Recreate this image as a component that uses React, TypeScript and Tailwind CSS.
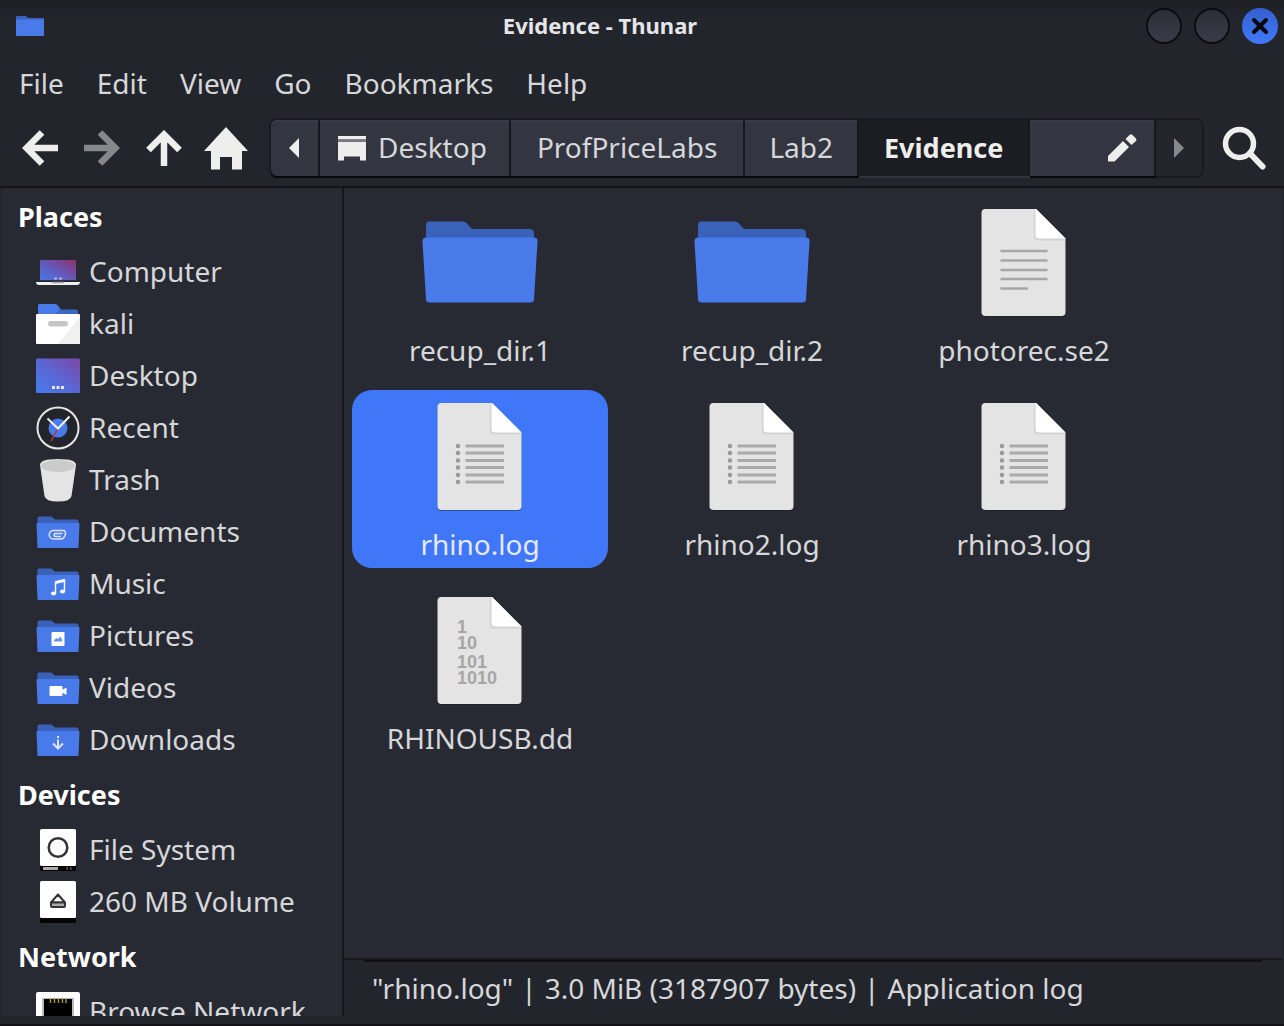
import type { ReactNode } from "react";

function Folder({ children, className }: { children?: ReactNode; className?: string }) {
  return (
    <svg viewBox="0 0 44 44" className={className ?? "size-11"} aria-hidden="true">
      <path d="M1.5 14V8Q1.5 6.5 3 6.5H15.5L19 9.5H41Q42.5 9.5 42.5 11V14Z" fill="#3a62bb" />
      <path d="M.5 14Q.5 13 1.5 13H42.5Q43.5 13 43.5 14L42.5 37Q42.5 38 41.5 38H2.5Q1.5 38 1.5 37Z" fill="#487ae9" />
      {children}
    </svg>
  );
}

function LargeFolder() {
  return (
    <svg viewBox="0 0 128 128" className="size-32" aria-hidden="true">
      <path d="M10 40V25Q10 21.500 13 21.500H47Q49 21.500 50.500 23L56 29H113Q118 29 118 34V40Z" fill="#3a62bb" />
      <path d="M6.500 42Q6.300 37.500 10 37.500H118Q122 37.500 121.500 42L118 99Q118 102.500 114.500 102.500H13.500Q10 102.500 10 99Z" fill="#487ae9" />
    </svg>
  );
}

function Page({ children }: { children: ReactNode }) {
  return (
    <svg viewBox="0 0 128 128" className="size-32" aria-hidden="true">
      <path d="M25.500 10H76L105.500 39.500V113Q105.500 117 101.500 117H25.500Q21.500 117 21.500 113V14Q21.500 10 25.500 10Z" fill="#17181d" opacity=".4" />
      <path d="M25.500 9H76L105.500 38.500V112Q105.500 116 101.500 116H25.500Q21.500 116 21.500 112V13Q21.500 9 25.500 9Z" fill="#e4e4e4" />
      <path d="M74 10V36.500Q74 40.500 78 40.500H105V38.500L76 9Z" fill="#d3d3d3" />
      <path d="M76 9L105.500 38.500H79Q75.500 38.500 75.500 35V9Z" fill="#fff" />
      {children}
    </svg>
  );
}

function TextPage() {
  return (
    <Page>
      <path d="M40.500 51H87.500M40.500 60.500H87.500M40.500 70H87.500M40.500 79H87.500M40.500 88.500H68" stroke="#a6a6a6" strokeWidth="2.500" />
    </Page>
  );
}

function LogPage() {
  const rows = [52, 59, 66.5, 73.5, 81, 88];
  return (
    <Page>
      {rows.map((y) => (
        <g key={y}>
          <circle cx="42" cy={y} r="2.300" fill="#999" />
          <path d={`M49.500 ${y}H88`} stroke="#aaa" strokeWidth="3" />
        </g>
      ))}
    </Page>
  );
}

function BinaryPage() {
  return (
    <Page>
      <text fill="#a6a6a6" fontFamily="Liberation Sans, sans-serif" fontWeight="700" fontSize="18">
        <tspan x="41" y="45">1</tspan>
        <tspan x="41" y="61">10</tspan>
        <tspan x="41" y="80">101</tspan>
        <tspan x="41" y="96">1010</tspan>
      </text>
    </Page>
  );
}

function ComputerIcon() {
  return (
    <svg viewBox="0 0 44 44" className="size-11" aria-hidden="true">
      <defs>
        <linearGradient id="screen" x1="0" y1="1" x2="1" y2="0">
          <stop offset="0" stopColor="#4479ea" />
          <stop offset=".5" stopColor="#6558b8" />
          <stop offset="1" stopColor="#8e306d" />
        </linearGradient>
      </defs>
      <rect x="4" y="10" width="36" height="20.500" rx="1" fill="url(#screen)" />
      <path d="M4 31H40" stroke="#191a20" strokeWidth="1" />
      <path d="M18 28.500H21M23 28.500H26" stroke="#b9b4dc" strokeWidth="2" />
      <path d="M0 32H44Q44 35 41 35H3Q0 35 0 32Z" fill="#f0f0f0" />
      <path d="M16 32.500H28" stroke="#aaa" strokeWidth="1.500" />
    </svg>
  );
}

function HomeFolderIcon() {
  return (
    <svg viewBox="0 0 44 44" className="size-11" aria-hidden="true">
      <path d="M2 13V4Q2 2 4 2H19Q21 2 23 5L25 7.500H40Q42 7.500 42 9V13Z" fill="#3a66c8" />
      <path d="M2 12V4Q2 2 4 2H19Q21 2 23 5L24 7L20 12Z" fill="#487ae9" />
      <rect y="12" width="44" height="30" rx="1" fill="#fff" />
      <path d="M44 15V41Q44 42 43 42H22Z" fill="#f0f0f0" />
      <rect x="12" y="19" width="20" height="5.500" rx="2.700" fill="#c6c6c6" />
    </svg>
  );
}

function DesktopIcon() {
  return (
    <svg viewBox="0 0 44 44" className="size-11" aria-hidden="true">
      <defs>
        <linearGradient id="desk" x1="0" y1="1" x2="1" y2="0">
          <stop offset="0" stopColor="#437cf0" />
          <stop offset=".5" stopColor="#5b66d2" />
          <stop offset="1" stopColor="#7e46a6" />
        </linearGradient>
      </defs>
      <rect y="4.500" width="44" height="34.500" rx="1.500" fill="url(#desk)" />
      <path d="M16 33.500H19M20.500 33.500H23.500M25 33.500H28" stroke="#e8e8fa" strokeWidth="3" />
    </svg>
  );
}

function RecentIcon() {
  return (
    <svg viewBox="0 0 44 44" className="size-11" aria-hidden="true">
      <circle cx="22" cy="22" r="20.500" fill="#23252d" stroke="#e6e6e6" strokeWidth="2" />
      <circle cx="22" cy="22" r="9.500" fill="#487ae9" />
      <path d="M21.500 23L15 35" stroke="#b23844" strokeWidth="1.500" />
      <path d="M11.500 12.500L22 22.500L33.500 10.500" stroke="#f2f2f2" strokeWidth="2" fill="none" />
    </svg>
  );
}

function TrashIcon() {
  return (
    <svg viewBox="0 0 44 44" className="size-11" aria-hidden="true">
      <path d="M4 7Q4 1 22 1T40 7L35.500 38Q34.500 43.500 22 43.500T8.500 38Z" fill="#e4e4e4" />
      <ellipse cx="22" cy="8" rx="17" ry="6" fill="#cbcbcb" />
    </svg>
  );
}

function DriveIcon({ removable }: { removable?: boolean }) {
  return (
    <svg viewBox="0 0 44 44" className="size-11" aria-hidden="true">
      <path d="M4 34H40V41.500Q40 43 38.500 43H5.500Q4 43 4 41.500Z" fill="#050505" />
      <rect x="4" y="1" width="36" height="37" rx="1.500" fill="#fff" />
      {removable ? (
        <>
          <path d="M15 22.500L22 14.500L29 22.500Z" fill="#fff" stroke="#333" strokeWidth="2" strokeLinejoin="round" />
          <rect x="15" y="22.500" width="14" height="4.500" rx="1" fill="#aaa" stroke="#333" strokeWidth="2" />
        </>
      ) : (
        <>
          <circle cx="22" cy="19.500" r="9.300" fill="none" stroke="#333" strokeWidth="2.500" />
          <path d="M7 40.500H22" stroke="#aaa" strokeWidth="3" />
          <path d="M30.500 40.500H32M34 40.500H35.500" stroke="#555" strokeWidth="3" />
        </>
      )}
    </svg>
  );
}

function NetworkIcon() {
  return (
    <svg viewBox="0 0 44 44" className="size-11" aria-hidden="true">
      <rect y="2" width="44" height="40" rx="2" fill="#fff" />
      <path d="M6 8H38V36H6Z" fill="#bbb" />
      <path d="M8 9H36V36H8Z" fill="#000" />
      <path d="M14.500 8V13M18.500 8V13M22.500 8V13M26.500 8V13M30 8V13" stroke="#a4904f" strokeWidth="1.500" />
    </svg>
  );
}

const places: { name: string; icon: ReactNode }[] = [
  { name: "Computer", icon: <ComputerIcon /> },
  { name: "kali", icon: <HomeFolderIcon /> },
  { name: "Desktop", icon: <DesktopIcon /> },
  { name: "Recent", icon: <RecentIcon /> },
  { name: "Trash", icon: <TrashIcon /> },
  {
    name: "Documents",
    icon: (
      <Folder>
        <path d="M27 20.500H17.500A4.200 4.200 0 0 0 17.500 29H25Q28 29 29.500 24Q30 20.500 27 20.500ZM26.500 23.500H19.500Q18 23.500 18 25T19.500 26.500H25" fill="none" stroke="#dbe5fc" strokeWidth="1.500" />
      </Folder>
    ),
  },
  {
    name: "Music",
    icon: (
      <Folder>
        <path d="M19.500 31.500V20L28.500 18V29" fill="none" stroke="#f4f7fe" strokeWidth="1.500" />
        <path d="M19.500 19L28.500 17V20L19.500 22Z" fill="#f4f7fe" />
        <ellipse cx="17.500" cy="31.500" rx="2.600" ry="2" fill="#f4f7fe" />
        <ellipse cx="26.500" cy="29.500" rx="2.600" ry="2" fill="#f4f7fe" />
      </Folder>
    ),
  },
  {
    name: "Pictures",
    icon: (
      <Folder>
        <rect x="15.500" y="18" width="13" height="14" rx="1" fill="#fff" />
        <path d="M18 27.500V26L20.500 24L22 25L24 22.500L26 25V27.500Z" fill="#6d94ed" />
      </Folder>
    ),
  },
  {
    name: "Videos",
    icon: (
      <Folder>
        <rect x="13.500" y="20" width="13" height="10" rx="1" fill="#fff" />
        <path d="M26 24L30.500 21.500V29L26 26.500Z" fill="#fff" />
      </Folder>
    ),
  },
  {
    name: "Downloads",
    icon: (
      <Folder>
        <path d="M22 18V20M22 21.500V30M17 25.500L22 30.500L27 25.500" fill="none" stroke="#dbe5fc" strokeWidth="2" />
      </Folder>
    ),
  },
];

const devices = [
  { name: "File System", icon: <DriveIcon /> },
  { name: "260 MB Volume", icon: <DriveIcon removable /> },
];

const network = [{ name: "Browse Network", icon: <NetworkIcon /> }];

const files: { name: string; icon: ReactNode; selected?: boolean }[] = [
  { name: "recup_dir.1", icon: <LargeFolder /> },
  { name: "recup_dir.2", icon: <LargeFolder /> },
  { name: "photorec.se2", icon: <TextPage /> },
  { name: "rhino.log", icon: <LogPage />, selected: true },
  { name: "rhino2.log", icon: <LogPage /> },
  { name: "rhino3.log", icon: <LogPage /> },
  { name: "RHINOUSB.dd", icon: <BinaryPage /> },
];

function SidebarSection({ title, items }: { title: string; items: { name: string; icon: ReactNode }[] }) {
  return (
    <section>
      <h2 className="flex h-[58px] items-center pl-4 text-[27px] leading-9 font-bold text-white">{title}</h2>
      <ul>
        {items.map((item) => (
          <li key={item.name}>
            <button type="button" className="flex h-[52px] w-full items-center gap-[9px] pl-[34px] text-left whitespace-nowrap">
              {item.icon}
              <span className="pb-0.5">{item.name}</span>
            </button>
          </li>
        ))}
      </ul>
    </section>
  );
}

function ArrowIcon({ className }: { className: string }) {
  return (
    <svg viewBox="0 0 36 36" className={className} aria-hidden="true">
      <path d="M36 18H5M20 2.500L4.500 18L20 33.500" fill="none" stroke="currentColor" strokeWidth="6.500" />
    </svg>
  );
}

const navButton = "flex h-15 w-[62px] shrink-0 items-center justify-center";
const segment = "flex items-center border-r-2 border-[#17181d] bg-[#333541] shadow-[inset_0_2px_0_#393b47,0_2px_0_#08090b]";
const windowButton = "size-9 rounded-full border-2 border-[#0c0d10] bg-linear-to-b from-[#2c2e38] to-[#393b47]";

export default function App() {
  return (
    <div className="flex h-screen flex-col overflow-hidden border-b-2 border-[#121217] bg-[#23252d] font-['Noto_Sans',sans-serif] text-[28px] leading-9 text-[#d6d7d9]">
      <header className="flex h-[52px] shrink-0 items-center bg-linear-to-b from-[#1e1f24] to-[#23252d] to-40% pr-1.5">
        <div className="w-[54px] pl-4">
          <svg viewBox="0 0 28 20" className="h-5 w-7" aria-hidden="true">
            <path d="M0 4V1Q0 0 1 0H10L12 2H27Q28 2 28 3V5H0Z" fill="#3a62bb" />
            <path d="M0 3.500H28V19Q28 20 27 20H1Q0 20 0 19Z" fill="#487ae9" />
          </svg>
        </div>
        <h1 className="flex-1 pb-0.5 text-center text-[22px] font-bold text-[#e6e6e8]">Evidence - Thunar</h1>
        <div className="flex gap-3">
          <button type="button" aria-label="Minimize" className={windowButton} />
          <button type="button" aria-label="Maximize" className={windowButton} />
          <button type="button" aria-label="Close" className="flex size-9 items-center justify-center rounded-full bg-linear-to-b from-[#3460cf] to-[#4079fa]">
            <svg viewBox="0 0 18 18" className="size-4.5" aria-hidden="true">
              <path d="M3 3L15 15M15 3L3 15" stroke="#07080c" strokeWidth="4" strokeLinecap="round" />
            </svg>
          </button>
        </div>
      </header>

      <nav aria-label="Menu" className="flex h-16 shrink-0 items-center gap-[33px] pb-0.5 pl-[19px]">
        {["File", "Edit", "View", "Go", "Bookmarks", "Help"].map((label) => (
          <button key={label} type="button">
            {label}
          </button>
        ))}
      </nav>

      <div className="flex h-[72px] shrink-0 items-center border-b-2 border-[#15161a] pb-1.5 pl-[9px]">
        <button type="button" aria-label="Back" className={`${navButton} text-[#eeeeec]`}>
          <ArrowIcon className="size-9" />
        </button>
        <button type="button" aria-label="Forward" disabled className={`${navButton} text-[#87888c]`}>
          <ArrowIcon className="size-9 rotate-180" />
        </button>
        <button type="button" aria-label="Up" className={`${navButton} text-[#eeeeec]`}>
          <ArrowIcon className="size-9 rotate-90" />
        </button>
        <button type="button" aria-label="Home" className={`${navButton} text-[#eeeeec]`}>
          <svg viewBox="0 0 44 44" className="size-11" aria-hidden="true">
            <path d="M22 1L44 25H38V43.500H28V31H16V43.500H7V25H0Z" fill="currentColor" />
          </svg>
        </button>

        <div className="ml-3 flex h-15 min-w-0 flex-1 rounded-lg border-2 border-[#1a1b20]">
          <button type="button" aria-label="Scroll path left" className={`${segment} w-[49px] shrink-0 justify-center rounded-l-md pr-0.5`}>
            <svg viewBox="0 0 10 20" className="h-5 w-2.5" aria-hidden="true">
              <path d="M10 0V20L0 10Z" fill="#eeeeec" />
            </svg>
          </button>
          <button type="button" className={`${segment} shrink-0 gap-3 pr-[22px] pl-[18px]`}>
            <svg viewBox="0 0 28 26" className="h-[26px] w-7" aria-hidden="true">
              <path d="M0 1H28V4.500H0ZM0 7H28V25.500H22V21.500H6V25.500H0Z" fill="#eeeeec" />
              <path d="M0 4.500H28V7H0Z" fill="#777983" />
            </svg>
            <span className="pb-0.5">Desktop</span>
          </button>
          <button type="button" className={`${segment} shrink-0 px-[26px] pb-0.5`}>ProfPriceLabs</button>
          <button type="button" className={`${segment} shrink-0 px-6 pb-0.5`}>Lab2</button>
          <button type="button" aria-current="page" className="flex shrink-0 items-center border-r-2 border-[#17181d] bg-[#1c1d22] px-[25px] text-[27px] font-bold text-[#eeeeec] shadow-[0_2px_0_#32333d]">
            Evidence
          </button>
          <button type="button" aria-label="Edit path" className={`${segment} min-w-0 flex-1 justify-end pr-4`}>
            <svg viewBox="0 0 30 30" className="size-[30px]" aria-hidden="true">
              <path d="M0 23L15 8L21 14L6.500 28.500H0ZM17.500 6L21.500 2Q23 .5 24.500 2L28 5.500Q29 7 28 8L23.500 12Z" fill="#eeeeec" />
            </svg>
          </button>
          <button type="button" aria-label="Scroll path right" disabled className="flex w-[46px] shrink-0 items-center justify-center">
            <svg viewBox="0 0 10 20" className="h-5 w-2.5" aria-hidden="true">
              <path d="M0 0V20L10 10Z" fill="#87888c" />
            </svg>
          </button>
        </div>
        <button type="button" aria-label="Search" className="flex h-15 w-20 shrink-0 items-center justify-center">
          <svg viewBox="0 0 44 44" className="size-11" aria-hidden="true">
            <circle cx="17.500" cy="17.500" r="14" fill="none" stroke="#eeeeec" strokeWidth="5.500" />
            <path d="M28 27.500L40.500 40.500" stroke="#eeeeec" strokeWidth="6" strokeLinecap="round" />
          </svg>
        </button>
      </div>

      <div className="flex min-h-0 flex-1 px-0.5 pb-2">
        <aside className="w-[342px] shrink-0 overflow-hidden border-r-2 border-[#15161a] bg-[#282a33]">
          <SidebarSection title="Places" items={places} />
          <SidebarSection title="Devices" items={devices} />
          <SidebarSection title="Network" items={network} />
        </aside>
        <div className="flex min-w-0 flex-1 flex-col">
          <main className="min-h-0 flex-1 overflow-hidden bg-[#282a33] p-2">
            <ul className="grid grid-cols-[repeat(auto-fill,256px)] gap-4">
              {files.map((file) => (
                <li key={file.name}>
                  <button
                    type="button"
                    className={
                      file.selected
                        ? "flex w-full flex-col items-center rounded-[20px] bg-[#4077f8] pt-1 pb-1.5 text-[#e4eafc]"
                        : "flex w-full flex-col items-center pt-1 pb-1.5"
                    }
                  >
                    {file.icon}
                    <span className="pt-1">{file.name}</span>
                  </button>
                </li>
              ))}
            </ul>
          </main>
          <footer className="h-[58px] shrink-0 border-t-2 border-[#17181d]">
            <div className="mx-5 flex gap-2 border-t-2 border-[#0f1013] px-2 pt-2 whitespace-nowrap">
              <span>"rhino.log"</span>
              <span>|</span>
              <span>3.0 MiB (3187907 bytes)</span>
              <span>|</span>
              <span>Application log</span>
            </div>
          </footer>
        </div>
      </div>
    </div>
  );
}
